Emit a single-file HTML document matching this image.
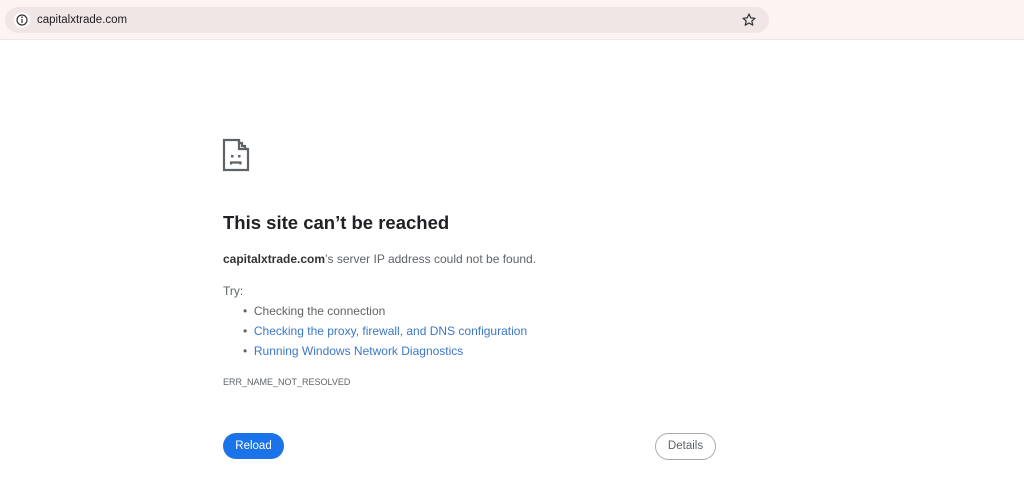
<!DOCTYPE html>
<html><head><meta charset="utf-8"><style>
*{margin:0;padding:0;box-sizing:border-box}
body{width:1024px;height:490px;background:#fff;font-family:"Liberation Sans",sans-serif;position:relative;overflow:hidden;color:#202124}
.top{position:absolute;left:0;top:0;width:1024px;height:40px;background:#fdf4f2;border-bottom:1px solid #efe6e4}
.omni{position:absolute;left:5px;top:7px;width:764px;height:26px;border-radius:13px;background:#f1e6e6}
.info{position:absolute;left:9px;top:5px;width:16px;height:16px;border-radius:50%;background:#fff}
.url{position:absolute;left:32px;top:7px;font-size:11.5px;color:#202124}
.abs{position:absolute}
.t{font-size:12px;color:#5f6368}
a{color:#3b78c6;text-decoration:none}
</style></head><body>
<div class="top"><div class="omni">
<div class="info"><svg width="16" height="16"><circle cx="8" cy="8" r="5" fill="none" stroke="#333" stroke-width="1.2"/><line x1="8" y1="7" x2="8" y2="11" stroke="#333" stroke-width="1.2"/><circle cx="8" cy="5.2" r="0.8" fill="#333"/></svg></div>
<div class="url">capitalxtrade.com</div>
<svg class="abs" style="left:736px;top:5px" width="16" height="16" viewBox="0 0 16 16"><path d="M8 2l1.8 3.9 4.2.4-3.2 2.8 1 4.1L8 11l-3.8 2.2 1-4.1L2 6.3l4.2-.4z" fill="none" stroke="#333" stroke-width="1.2" stroke-linejoin="round"/></svg>
</div></div>
<svg class="abs" style="left:222px;top:138px" width="30" height="34" viewBox="0 0 30 34"><path d="M2 2h15v3h3v3h3v3h3v21H2z" fill="none" stroke="#5f6368" stroke-width="2.2"/><path d="M17 2v9h9" fill="none" stroke="#5f6368" stroke-width="2.2"/><rect x="9" y="17" width="2.5" height="2.5" fill="#5f6368"/><rect x="16" y="17" width="2.5" height="2.5" fill="#5f6368"/><path d="M9 26.5v-2h9.5v2" fill="none" stroke="#5f6368" stroke-width="2.2"/></svg>
<div class="abs" style="left:223px;top:212px;font-size:18.5px;font-weight:bold;color:#202124">This site can’t be reached</div>
<div class="abs t" style="left:223px;top:252px"><b style="color:#333">capitalxtrade.com</b>’s server IP address could not be found.</div>
<div class="abs t" style="left:223px;top:284px">Try:</div>
<div class="abs t" style="left:243px;top:301px;line-height:20px">
<div>•&nbsp;&nbsp;Checking the connection</div>
<div>•&nbsp;&nbsp;<a>Checking the proxy, firewall, and DNS configuration</a></div>
<div>•&nbsp;&nbsp;<a>Running Windows Network Diagnostics</a></div>
</div>
<div class="abs" style="left:223px;top:377px;font-size:9px;color:#5f6368">ERR_NAME_NOT_RESOLVED</div>
<div class="abs" style="left:223px;top:433px;width:61px;height:26px;border-radius:13px;background:#1a73e8;color:#fff;font-size:11.5px;text-align:center;line-height:26px">Reload</div>
<div class="abs" style="left:655px;top:433px;width:61px;height:27px;border-radius:14px;border:1px solid #aaa;color:#5f6368;font-size:11.5px;text-align:center;line-height:25px">Details</div>
</body></html>
